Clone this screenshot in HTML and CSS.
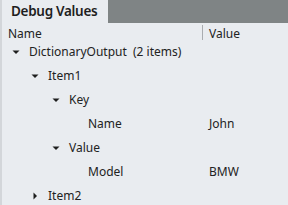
FILE: index.html
```html
<!DOCTYPE html>
<html>
<head>
<meta charset="utf-8">
<link rel="stylesheet" href="styles.css">
</head>
<body>
<div class="panel">
  <div class="tabs">
    <div class="tab">Debug Values</div>
  </div>
  <div class="content">
    <div class="header">
      <div class="col-name">Name</div>
      <div class="col-value">Value</div>
    </div>
    <div class="row">
      <div class="col-name lvl0"><svg class="tri" width="8" height="8" viewBox="0 0 8 8"><path d="M0.5 2.5 L7.5 2.5 L4 6 Z"/></svg><span>DictionaryOutput&nbsp; (2 items)</span></div>
      <div class="col-val"></div>
    </div>
    <div class="row">
      <div class="col-name lvl1"><svg class="tri" width="8" height="8" viewBox="0 0 8 8"><path d="M0.5 2.5 L7.5 2.5 L4 6 Z"/></svg><span>Item1</span></div>
      <div class="col-val"></div>
    </div>
    <div class="row">
      <div class="col-name lvl2"><svg class="tri" width="8" height="8" viewBox="0 0 8 8"><path d="M0.5 2.5 L7.5 2.5 L4 6 Z"/></svg><span>Key</span></div>
      <div class="col-val"></div>
    </div>
    <div class="row">
      <div class="col-name lvl3"><span>Name</span></div>
      <div class="col-val">John</div>
    </div>
    <div class="row">
      <div class="col-name lvl2"><svg class="tri" width="8" height="8" viewBox="0 0 8 8"><path d="M0.5 2.5 L7.5 2.5 L4 6 Z"/></svg><span>Value</span></div>
      <div class="col-val"></div>
    </div>
    <div class="row">
      <div class="col-name lvl3"><span>Model</span></div>
      <div class="col-val">BMW</div>
    </div>
    <div class="row">
      <div class="col-name lvl1"><svg class="tri" width="8" height="8" viewBox="0 0 8 8"><path d="M2.5 0.5 L6 4 L2.5 7.5 Z"/></svg><span>Item2</span></div>
      <div class="col-val"></div>
    </div>
  </div>
</div>
</body>
</html>
```

FILE: styles.css
```css
html, body {
  margin: 0;
  padding: 0;
  background: #e9ecf0;
}
body {
  width: 288px;
  height: 205px;
  overflow: hidden;
  font-family: "Noto Sans", "Open Sans", sans-serif;
  font-size: 12px;
  color: #222222;
}
.panel {
  height: 205px;
  border-left: 2px solid #d3d6da;
  box-sizing: border-box;
}
.tabs {
  display: flex;
  height: 23px;
  background: #7f8485;
}
.tab {
  width: 106px;
  background: #e9ecf0;
  font-size: 13.5px;
  font-weight: 600;
  line-height: 23px;
  padding-left: 9px;
  box-sizing: border-box;
  color: #1e1e1e;
  letter-spacing: -0.3px;
}
.header {
  display: flex;
  height: 17px;
  line-height: 22px;
}
.header .col-name {
  width: 200px;
  padding-left: 6px;
  box-sizing: border-box;
}
.header .col-value {
  border-left: 1px solid #a9acb0;
  height: 15px;
  margin-top: 2px;
  line-height: 18px;
  padding-left: 6px;
}
.row {
  display: flex;
  height: 24px;
  line-height: 24px;
}
.row .col-name {
  width: 201px;
  display: flex;
  align-items: center;
  box-sizing: border-box;
}
.row .col-val {
  padding-left: 6px;
}
.tri {
  fill: #1e1e1e;
  margin-right: 9px;
  flex: none;
}
.lvl0 { padding-left: 10px; }
.lvl1 { padding-left: 29px; }
.lvl2 { padding-left: 50px; }
.lvl3 { padding-left: 86px; }
```
